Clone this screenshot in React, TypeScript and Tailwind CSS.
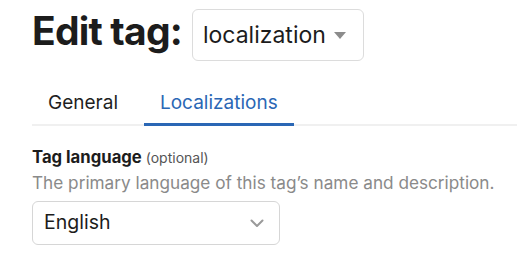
import React from "react";

export default function App() {
  return (
    <div className="w-[517px] h-[260px] bg-white overflow-hidden pl-[32px] font-['Inter',sans-serif]">
      <div className="flex items-start">
        <h1 className="mt-[7px] text-[39px] leading-[48px] font-bold text-[#1c1c1c] tracking-[-0.8px]">
          Edit tag:
        </h1>
        <div className="ml-[10px] mt-[9px] h-[52px] w-[172px] flex items-center justify-between border border-[#dcdcdc] rounded-[6px] pl-[10px] pr-[17px]">
          <span className="text-[23px] text-[#1c1c1c]">localization</span>
          <svg width="12" height="7" viewBox="0 0 12 7">
            <path d="M0 0 L12 0 L6 7 Z" fill="#8c8c8c" />
          </svg>
        </div>
      </div>

      <div className="mt-[30px] flex border-b-2 border-[#f0f0f0]">
        <button className="px-[16px] pb-[8px] text-[19px] leading-[24px] text-[#1f1f1f] -mb-[2px] border-b-[3px] border-transparent">
          General
        </button>
        <button className="ml-[10px] px-[16px] pb-[8px] text-[19px] leading-[24px] text-[#2a67b5] -mb-[2px] border-b-[3px] border-[#2a67b5]">
          Localizations
        </button>
      </div>

      <div className="mt-[21px] text-[16.7px] leading-[20px] font-bold text-[#1c1c1c]">
        Tag language <span className="text-[14px] font-normal text-[#555]">(optional)</span>
      </div>
      <div className="mt-[3px] text-[17.2px] leading-[24px] text-[#8a8a8a]">
        The primary language of this tag’s name and description.
      </div>
      <div className="mt-[6px] h-[44px] w-[248px] flex items-center justify-between border border-[#d6d6d6] rounded-[6px] pl-[11px] pr-[15px]">
        <span className="text-[19.5px] text-[#1c1c1c]">English</span>
        <svg width="14" height="9" viewBox="0 0 14 9" fill="none">
          <path d="M1.5 1.5 L7 7 L12.5 1.5" stroke="#9a9a9a" strokeWidth="2" strokeLinecap="round" strokeLinejoin="round" />
        </svg>
      </div>
    </div>
  );
}
